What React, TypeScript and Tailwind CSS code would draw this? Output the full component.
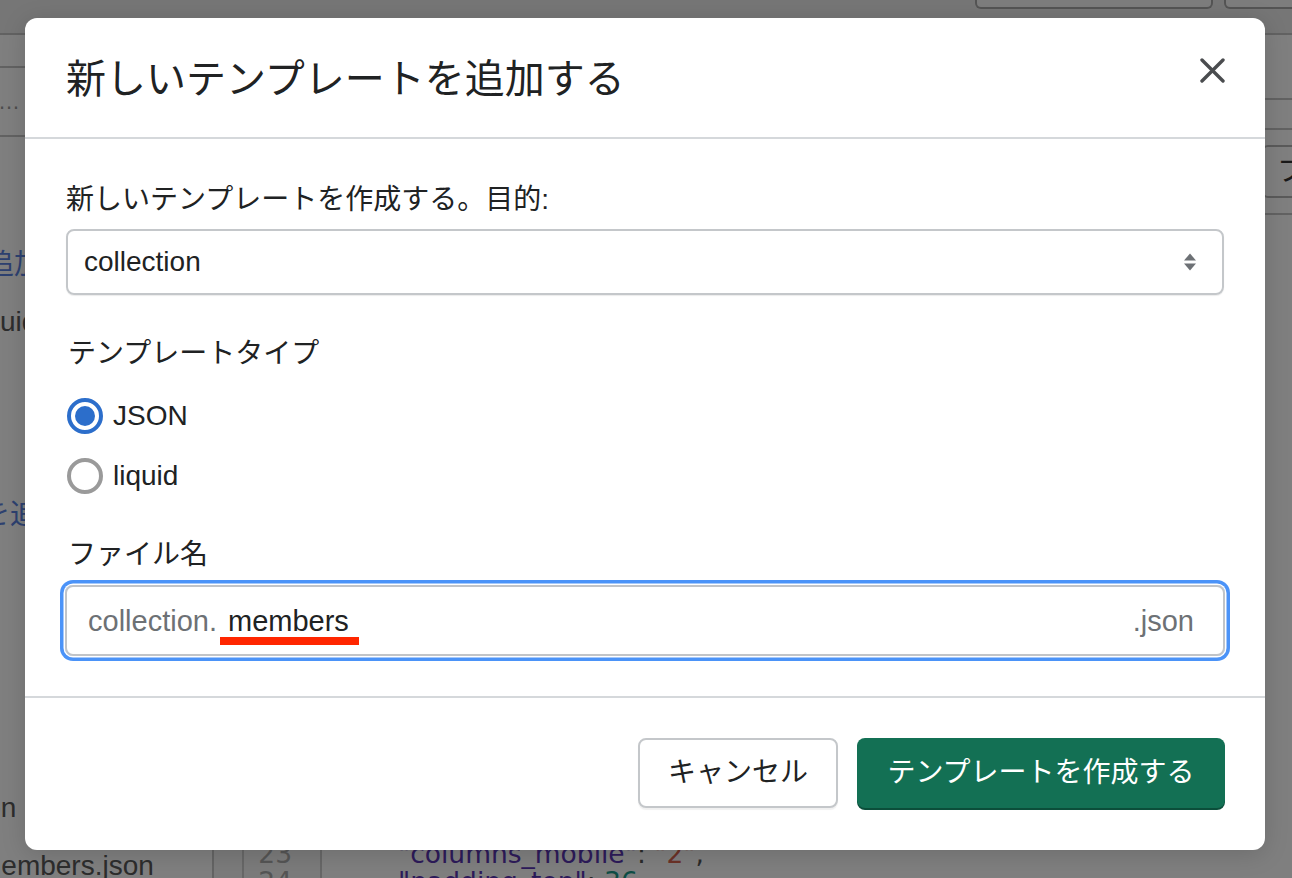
import React from "react";

function Background() {
  return (
    <div className="flex flex-col h-full">
      <div className="h-[35px] shrink-0 bg-[#ececec] border-b-2 border-[#c4c4c4] flex justify-end items-start gap-[11px] overflow-hidden">
        <div className="w-[238px] h-[9px] bg-[#fafafa] border-2 border-t-0 border-[#a8a8a8] rounded-b-[6px]" />
        <div className="w-[80px] h-[9px] bg-[#fafafa] border-2 border-t-0 border-[#a8a8a8] rounded-b-[6px] -mr-[12px]" />
      </div>
      <div className="flex flex-1 min-h-0">
        <aside className="w-[214px] shrink-0 border-r-2 border-[#c8c8c8] flex flex-col overflow-hidden text-[28px] whitespace-nowrap">
          <div className="h-[33px] shrink-0 border-b-2 border-[#c4c4c4]" />
          <div className="h-[69px] shrink-0 border-b-2 border-[#c4c4c4] flex items-center text-[#9a9a9a] -ml-[2px] text-[22px]">
            …
          </div>
          <div className="mt-[108px] leading-[40px] text-[#5a82e0] -ml-[14px]">追加する</div>
          <div className="mt-[17px] leading-[40px] text-[#5a5a5a] -ml-[28px]">liquid</div>
          <div className="mt-[153px] leading-[40px] text-[#5a82e0] -ml-[18px]">を追加</div>
          <div className="mt-[253px] leading-[40px] text-[#5a5a5a] -ml-[21px]">ion</div>
          <div className="mt-[18px] leading-[40px] text-[#5a5a5a] -ml-[22px]">members.json</div>
        </aside>
        <main className="flex-1 flex flex-col min-w-0 overflow-hidden">
          <div className="h-[65px] shrink-0 border-b-2 border-[#c4c4c4]" />
          <div className="h-[30px] shrink-0 border-b-2 border-[#c4c4c4]" />
          <div className="pt-[15px] flex justify-end shrink-0">
            <div className="w-[130px] h-[53px] -mr-[100px] border-2 border-[#b4b4b4] rounded-[6px] flex items-center pl-[13px] text-[28px] text-[#333] whitespace-nowrap overflow-hidden">
              フォーマット
            </div>
          </div>
          <div className="mt-[15px] border-b-2 border-[#c4c4c4] shrink-0" />
          <div className="flex flex-1 min-h-0 font-['DejaVu_Sans',sans-serif]">
            <div className="w-[30px] shrink-0 border-r-2 border-[#cfcfcf] bg-[#f7f7f7]" />
            <div className="w-[78px] shrink-0 border-r-2 border-[#cfcfcf] bg-[#f7f7f7] flex flex-col">
              <div className="flex-1" />
              <div className="h-[38px] shrink-0 overflow-hidden text-[26.5px] leading-[28px] text-[#ababab] text-right pr-[28px]">
                <div>23</div>
                <div>24</div>
              </div>
            </div>
            <div className="flex-1 flex flex-col min-w-0">
              <div className="flex-1" />
              <div className="h-[38px] shrink-0 overflow-hidden text-[26.5px] leading-[28px] pl-[76px] whitespace-nowrap text-[#555]">
                <div>
                  <span className="text-[#5a36b4]">"columns_mobile"</span>
                  <span>: </span>
                  <span className="text-[#d8644e]">"2"</span>
                  <span>,</span>
                </div>
                <div>
                  <span className="text-[#5a36b4]">"padding_top"</span>
                  <span>: </span>
                  <span className="text-[#1c9a8a]">36</span>
                  <span>,</span>
                </div>
              </div>
            </div>
          </div>
        </main>
      </div>
    </div>
  );
}

function Radio({ checked, label }: { checked: boolean; label: string }) {
  return (
    <div className="h-[40px] flex items-center gap-[10px] pl-[1px]">
      {checked ? (
        <div className="w-[36px] h-[36px] rounded-full border-[4px] border-[#2c6ecb] flex items-center justify-center">
          <div className="w-[20px] h-[20px] rounded-full bg-[#2c6ecb]" />
        </div>
      ) : (
        <div className="w-[36px] h-[36px] rounded-full border-[4px] border-[#9a9a9a]" />
      )}
      <span className="text-[28px] leading-[40px] text-[#202223]">{label}</span>
    </div>
  );
}

function Modal() {
  return (
    <div className="w-[1240px] h-[832px] bg-white rounded-[12px] flex flex-col overflow-hidden shadow-[0_4px_24px_rgba(0,0,0,0.15)]">
      <div className="h-[121px] shrink-0 flex justify-between pl-[41px] pr-[40px] border-b-2 border-[#d5d8db]">
        <h1 className="self-center text-[40px] leading-[56px] font-normal text-[#202223] mt-[2px]">
          新しいテンプレートを追加する
        </h1>
        <button className="self-start mt-[40px] w-[25px] h-[25px] flex items-center justify-center">
          <svg width="25" height="25" viewBox="0 0 25 25" fill="none">
            <path d="M2 2L23 23M23 2L2 23" stroke="#4a4c4f" strokeWidth="3.4" strokeLinecap="round" />
          </svg>
        </button>
      </div>
      <div className="flex-1 px-[41px] pt-[41px] flex flex-col">
        <div className="text-[28px] leading-[40px] text-[#202223]">新しいテンプレートを作成する。目的:</div>
        <div className="mt-[9px] h-[66px] shrink-0 border-2 border-[#c4c7ca] rounded-[8px] flex items-center justify-between pl-[16px] pr-[25px] shadow-[0_1px_1px_rgba(0,0,0,0.08)]">
          <span className="text-[28px] leading-[40px] text-[#202223]">collection</span>
          <svg width="14" height="20" viewBox="0 0 14 20">
            <path d="M1 8.5L7 1.5L13 8.5Z" fill="#6d7175" />
            <path d="M1 11.5L7 18.5L13 11.5Z" fill="#6d7175" />
          </svg>
        </div>
        <div className="mt-[39px] text-[28px] leading-[40px] text-[#202223] pl-[2px]">テンプレートタイプ</div>
        <div className="mt-[22px]">
          <Radio checked label="JSON" />
        </div>
        <div className="mt-[20px]">
          <Radio checked={false} label="liquid" />
        </div>
        <div className="mt-[39px] text-[28px] leading-[40px] text-[#202223] pl-[2px]">ファイル名</div>
        <div className="mt-[10px] -mx-[1px] h-[71px] shrink-0 border-2 border-[#c1c4c8] rounded-[8px] flex items-center justify-between pl-[21px] pr-[29px] shadow-[0_0_0_1.5px_#ffffff,0_0_0_5px_#4b93f8]">
          <div className="flex items-center">
            <span className="text-[29px] leading-[40px] text-[#6d7175]">collection.</span>
            <span className="relative ml-[11px] text-[29px] leading-[40px] text-[#202223]">
              members
              <span className="absolute left-[-8px] right-[-10px] top-[36px] h-[8px] bg-[#ff2600]" />
            </span>
          </div>
          <span className="text-[29px] leading-[40px] text-[#6d7175]">.json</span>
        </div>
      </div>
      <div className="h-[154px] shrink-0 border-t-2 border-[#d5d8db] flex justify-end items-start pt-[40px] pr-[40px] gap-[19px]">
        <button className="w-[200px] h-[70px] border-2 border-[#c4c7ca] rounded-[8px] bg-white text-[28px] text-[#202223] shadow-[0_2px_1px_rgba(0,0,0,0.06)] flex items-center justify-center">
          キャンセル
        </button>
        <button className="w-[368px] h-[70px] rounded-[8px] bg-[#137054] text-[28px] text-white shadow-[0_2px_0_#0b4e3a] flex items-center justify-center">
          テンプレートを作成する
        </button>
      </div>
    </div>
  );
}

export default function App() {
  return (
    <div className="relative w-[1292px] h-[878px] overflow-hidden bg-white font-['Liberation_Sans','Noto_Sans_CJK_JP',sans-serif]">
      <Background />
      <div className="absolute inset-0 bg-black/50" />
      <div className="absolute inset-0 pt-[18px] pl-[25px]">
        <Modal />
      </div>
    </div>
  );
}
